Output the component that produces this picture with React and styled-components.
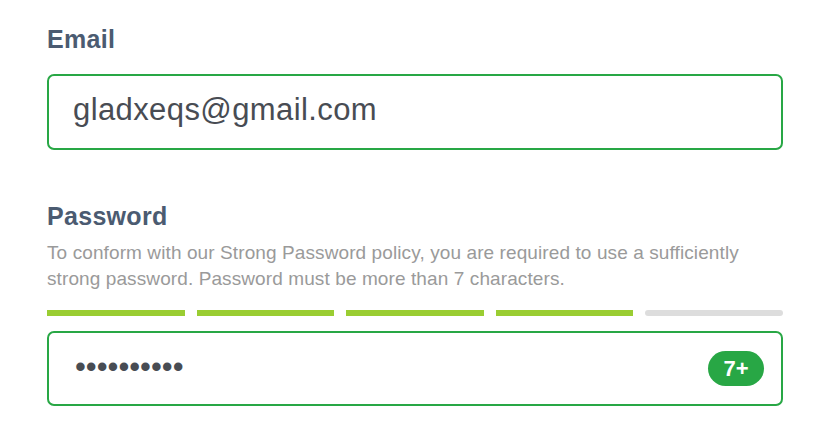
import styled, { createGlobalStyle } from "styled-components";

const GlobalStyle = createGlobalStyle`
  html, body {
    margin: 0;
    padding: 0;
    background: #fff;
  }
  body {
    font-family: "Liberation Sans", Arial, Helvetica, sans-serif;
  }
`;

const GREEN = "#28a745";

const strength = [true, true, true, true, false];

const App = () => {
  return (
    <Form>
      <GlobalStyle />
      <Field>
        <Label>Email</Label>
        <InputBox>
          <TextInput type="email" defaultValue="gladxeqs@gmail.com" />
        </InputBox>
      </Field>

      <Field spaced>
        <Label>Password</Label>
        <Hint>
          To conform with our Strong Password policy, you are required to use a sufficiently
          strong password. Password must be more than 7 characters.
        </Hint>
        <Meter>
          {strength.map((on, i) => (
            <Segment key={i} active={on} />
          ))}
        </Meter>
        <InputBox tight>
          <PasswordInput type="password" defaultValue="abcdefghij" />
          <Badge>7+</Badge>
        </InputBox>
      </Field>
    </Form>
  );
};

export default App;

const Form = styled.div`
  width: 736px;
  padding: 25px 44px 30px 47px;
`;

const Field = styled.div`
  display: flex;
  flex-direction: column;
  margin-top: ${(props) => (props.spaced ? "52px" : "0")};
`;

const Label = styled.label`
  font-size: 25px;
  line-height: 28px;
  font-weight: 700;
  letter-spacing: 0.3px;
  color: #4b5b71;
`;

const Hint = styled.p`
  margin: 10px 0 0;
  font-size: 19px;
  line-height: 26px;
  letter-spacing: 0.1px;
  color: #9a9a9a;
`;

const Meter = styled.div`
  display: flex;
  gap: 12px;
  margin-top: 18px;
`;

const Segment = styled.div`
  flex: 1;
  height: 6px;
  background: ${(props) => (props.active ? "#9acd32" : "#dddddd")};
  border-radius: ${(props) => (props.active ? "0" : "3px")};
`;

const InputBox = styled.div`
  display: flex;
  align-items: center;
  box-sizing: border-box;
  height: ${(props) => (props.tight ? "75px" : "76px")};
  margin-top: ${(props) => (props.tight ? "15px" : "21px")};
  padding: 0 17px 0 24px;
  border: 2px solid ${GREEN};
  border-radius: 7px;
  background: #fff;
`;

const TextInput = styled.input`
  flex: 1;
  min-width: 0;
  border: none;
  outline: none;
  padding: 0 0 4px;
  background: transparent;
  font-family: "Liberation Sans", Arial, Helvetica, sans-serif;
  font-size: 31px;
  letter-spacing: 0.4px;
  color: #484c53;
`;

const PasswordInput = styled(TextInput)`
  font-size: 31px;
  letter-spacing: 0;
  padding: 0 0 4px 2px;
`;

const Badge = styled.span`
  display: inline-flex;
  align-items: center;
  justify-content: center;
  width: 56px;
  height: 35px;
  border-radius: 18px;
  background: ${GREEN};
  color: #fff;
  font-size: 22px;
  font-weight: 700;
`;
